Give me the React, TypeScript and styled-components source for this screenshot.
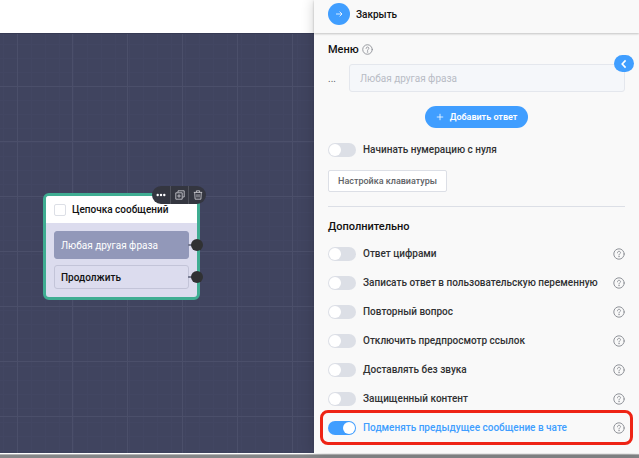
import React, { useState } from "react";
import styled, { createGlobalStyle } from "styled-components";

const blue = "#409eff";

const GlobalStyle = createGlobalStyle`
  *, *::before, *::after { box-sizing: border-box; }
  body {
    margin: 0;
    font-family: Roboto, Inter, sans-serif;
    color: #303133;
    background: #fff;
  }
  button, input { font: inherit; color: inherit; margin: 0; }
  button { padding: 0; border: 0; background: none; cursor: pointer; }
  h2 { margin: 0; }
`;

const Page = styled.div`
  display: flex;
  flex-direction: column;
  min-height: 100vh;
`;

const Workspace = styled.div`
  flex: 1;
  display: grid;
  grid-template-columns: minmax(0, 1fr) 325px;
`;

const Editor = styled.main`
  display: flex;
  flex-direction: column;
`;

const TopBar = styled.header`
  height: 33px;
  background: #fff;
`;

const Canvas = styled.div`
  position: relative;
  flex: 1;
  overflow: hidden;
  background-color: #40445f;
  background-image:
    linear-gradient(#4b4f6a 1px, transparent 1px),
    linear-gradient(90deg, #4b4f6a 1px, transparent 1px),
    linear-gradient(#424662 1px, transparent 1px),
    linear-gradient(90deg, #424662 1px, transparent 1px);
  background-size: 55px 55px, 55px 55px, 14px 14px, 14px 14px;
  background-position: 17px 52px, 17px 52px, 3px 10px, 3px 10px;
  border-top: 1px solid #363a54;
`;

const Node = styled.section`
  position: absolute;
  left: 43px;
  top: 159px;
  width: 157px;
  border: 3px solid #3fad92;
  border-radius: 6px;
  background: #dcdcee;
`;

const NodeHeader = styled.label`
  display: flex;
  align-items: center;
  gap: 6px;
  height: 27px;
  padding-left: 8px;
  border-radius: 3px 3px 0 0;
  background: #fff;
  color: #111;
  font-size: 10px;
  font-weight: 500;
`;

const NodeCheck = styled.input`
  appearance: none;
  width: 12px;
  height: 12px;
  border: 1px solid #dcdfe6;
  border-radius: 2px;
  background: #fff;
`;

const NodeBody = styled.div`
  display: flex;
  flex-direction: column;
  gap: 6px;
  padding: 8px;
`;

const Reply = styled.div<{ $filled?: boolean }>`
  position: relative;
  display: flex;
  align-items: center;
  height: ${(p) => (p.$filled ? 28 : 24)}px;
  padding: 0 6px;
  border: 1px solid ${(p) => (p.$filled ? "#9298b9" : "#c3c4d8")};
  border-radius: 3px;
  background: ${(p) => (p.$filled ? "#9298b9" : "#dcdcee")};
  color: ${(p) => (p.$filled ? "#fff" : "#111")};
  font-size: 10px;
  font-weight: ${(p) => (p.$filled ? 400 : 500)};
  &::before {
    content: "";
    position: absolute;
    left: 100%;
    width: 6px;
    height: 2px;
    background: #777b92;
  }
`;

const Port = styled.span`
  position: absolute;
  right: -15px;
  width: 12px;
  height: 12px;
  border-radius: 50%;
  background: #303133;
`;

const NodeTools = styled.div`
  position: absolute;
  top: -10px;
  right: -9px;
  display: flex;
  height: 18px;
  border-radius: 9px;
  background: #343640;
  color: #fff;
  overflow: hidden;
`;

const NodeTool = styled.button`
  display: grid;
  place-items: center;
  width: 18px;
  & + & { border-left: 1px solid #50525c; }
`;

const Panel = styled.aside`
  position: relative;
  display: flex;
  flex-direction: column;
  background: #f9f9f9;
  box-shadow: 0 0 12px rgba(0, 0, 0, 0.2);
`;

const PanelHeader = styled.header`
  display: flex;
  height: 33px;
  padding: 3px 14px 0;
  background: #f9f9f9;
  box-shadow: 0 1px 2px rgba(0, 0, 0, 0.22);
`;

const CloseButton = styled.button`
  display: flex;
  align-items: center;
  gap: 6px;
  height: 22px;
  color: #111;
  font-size: 10px;
  font-weight: 500;
`;

const CloseIcon = styled.span`
  display: grid;
  place-items: center;
  width: 22px;
  height: 22px;
  border-radius: 50%;
  background: ${blue};
`;

const PanelBody = styled.div`
  display: flex;
  flex-direction: column;
  padding: 8px 14px 0;
`;

const Title = styled.h2`
  display: flex;
  align-items: center;
  gap: 3px;
  height: 16px;
  color: #111;
  font-size: 11px;
  font-weight: 500;
`;

const Answer = styled.label`
  display: grid;
  grid-template-columns: 9px minmax(0, 1fr);
  align-items: center;
  gap: 12px;
  margin-top: 7px;
  color: #606266;
  font-size: 10px;
`;

const AnswerInput = styled.input`
  min-width: 0;
  height: 28px;
  padding: 0 10px;
  border: 1px solid #e4e7ed;
  border-radius: 3px;
  background: #f5f7fa;
  &::placeholder { color: #b8bcc5; opacity: 1; }
`;

const AddButton = styled.button`
  display: flex;
  align-items: center;
  align-self: center;
  gap: 6px;
  height: 22px;
  margin: 14px 0 7px;
  padding: 0 11px;
  border-radius: 11px;
  background: ${blue};
  color: #fff;
  font-size: 9px;
  font-weight: 600;
`;

const KeyboardButton = styled.button`
  align-self: flex-start;
  height: 22px;
  margin: 6px 0 14px;
  padding: 0 9px;
  border: 1px solid #dcdfe6;
  border-radius: 2px;
  background: #fff;
  color: #606266;
  font-size: 9px;
  font-weight: 500;
`;

const Divider = styled.hr`
  width: 100%;
  margin: 0 0 11px;
  border: 0;
  border-top: 1px solid #dcdfe6;
`;

const Options = styled.div`
  display: flex;
  flex-direction: column;
  margin-top: 5px;
`;

const Row = styled.div<{ $marked?: boolean }>`
  position: relative;
  display: flex;
  align-items: center;
  justify-content: space-between;
  height: 29px;
  &::after {
    content: "";
    display: ${(p) => (p.$marked ? "block" : "none")};
    position: absolute;
    inset: -3px -8px;
    border: 3px solid #ee2415;
    border-radius: 8px;
    pointer-events: none;
  }
`;

const SwitchLabel = styled.label<{ $on: boolean }>`
  display: flex;
  align-items: center;
  gap: 7px;
  color: ${(p) => (p.$on ? blue : "#303133")};
  font-size: 10px;
  font-weight: 500;
  white-space: nowrap;
  cursor: pointer;
`;

const SwitchInput = styled.input`
  appearance: none;
  display: flex;
  align-items: center;
  width: 28px;
  height: 14px;
  padding: 1px;
  border-radius: 7px;
  background: #dcdfe6;
  cursor: pointer;
  &::before {
    content: "";
    width: 12px;
    height: 12px;
    border-radius: 50%;
    background: #fff;
  }
  &:checked { justify-content: flex-end; background: ${blue}; }
`;

const HelpButton = styled.button`
  display: grid;
  place-items: center;
`;

const CollapseTab = styled.button`
  position: absolute;
  top: 55px;
  right: 5px;
  display: grid;
  place-items: center;
  width: 20px;
  height: 17px;
  border-radius: 9px;
  background: ${blue};
`;

const Footer = styled.footer`
  height: 4px;
  border-top: 1px solid #b4b5b6;
  background: #858789;
`;

const FooterGap = styled.div`
  height: 1px;
  background: #fff;
`;

function Help({ size = 12 }: { size?: number }) {
  return (
    <HelpButton type="button" aria-label="Справка">
      <svg width={size} height={size} viewBox="0 0 12 12" fill="none" stroke="#909399" strokeLinecap="round">
        <circle cx="6" cy="6" r="5.2" strokeWidth="1" />
        <path d="M4.5 4.8C4.5 3.9 5.1 3.3 6 3.3s1.5.6 1.5 1.4C7.5 5.7 6 5.7 6 7" strokeWidth="1" />
        <circle cx="6" cy="8.7" r=".2" strokeWidth="0.8" />
      </svg>
    </HelpButton>
  );
}

function Switch({ text, initial = false }: { text: string; initial?: boolean }) {
  const [on, setOn] = useState(initial);
  return (
    <SwitchLabel $on={on}>
      <SwitchInput type="checkbox" role="switch" checked={on} onChange={(e) => setOn(e.target.checked)} />
      {text}
    </SwitchLabel>
  );
}

const options = [
  { text: "Ответ цифрами" },
  { text: "Записать ответ в пользовательскую переменную" },
  { text: "Повторный вопрос" },
  { text: "Отключить предпросмотр ссылок" },
  { text: "Доставлять без звука" },
  { text: "Защищенный контент" },
  { text: "Подменять предыдущее сообщение в чате", active: true },
];

export default function App() {
  return (
    <>
      <GlobalStyle />
      <Page>
        <Workspace>
          <Editor>
            <TopBar />
            <Canvas>
              <Node>
                <NodeHeader>
                  <NodeCheck type="checkbox" />
                  Цепочка сообщений
                </NodeHeader>
                <NodeBody>
                  <Reply $filled>Любая другая фраза<Port /></Reply>
                  <Reply>Продолжить<Port /></Reply>
                </NodeBody>
                <NodeTools>
                  <NodeTool type="button" aria-label="Ещё">
                    <svg width="10" height="10" viewBox="0 0 10 10" fill="currentColor">
                      <circle cx="1.7" cy="5" r="1.2" /><circle cx="5" cy="5" r="1.2" /><circle cx="8.3" cy="5" r="1.2" />
                    </svg>
                  </NodeTool>
                  <NodeTool type="button" aria-label="Копировать">
                    <svg width="10" height="10" viewBox="0 0 10 10" fill="none" stroke="#d5d6da" strokeWidth=".8">
                      <path d="M3 2.4V.8h6.2V7H7.6M.8 2.8h6.4v6.4H.8zM4 4.2v3.6M2.2 6h3.6" />
                    </svg>
                  </NodeTool>
                  <NodeTool type="button" aria-label="Удалить">
                    <svg width="10" height="10" viewBox="0 0 10 10" fill="none" stroke="#d5d6da" strokeWidth=".8">
                      <path d="M.8 2.4h8.4M3.4 2.4V.8h3.2v1.6M1.7 2.4l.4 6.8h5.8l.4-6.8M4 4.2v3.2M6 4.2v3.2" />
                    </svg>
                  </NodeTool>
                </NodeTools>
              </Node>
            </Canvas>
          </Editor>
          <Panel>
            <PanelHeader>
              <CloseButton type="button">
                <CloseIcon>
                  <svg width="8" height="8" viewBox="0 0 8 8" fill="none" stroke="#fff" strokeWidth=".8">
                    <path d="M1 4h6M4.6 1.6 7 4 4.6 6.4" />
                  </svg>
                </CloseIcon>
                Закрыть
              </CloseButton>
            </PanelHeader>
            <PanelBody>
              <Title>Меню <Help size={11} /></Title>
              <Answer>
                ...
                <AnswerInput placeholder="Любая другая фраза" />
              </Answer>
              <AddButton type="button">
                <svg width="8" height="8" viewBox="0 0 8 8" stroke="#fff" strokeWidth=".8">
                  <path d="M4 .8v6.4M.8 4h6.4" />
                </svg>
                Добавить ответ
              </AddButton>
              <Row><Switch text="Начинать нумерацию с нуля" /></Row>
              <KeyboardButton type="button">Настройка клавиатуры</KeyboardButton>
              <Divider />
              <Title>Дополнительно</Title>
              <Options>
                {options.map((o) => (
                  <Row key={o.text} $marked={o.active}>
                    <Switch text={o.text} initial={o.active} />
                    <Help />
                  </Row>
                ))}
              </Options>
            </PanelBody>
            <CollapseTab type="button" aria-label="Свернуть панель">
              <svg width="8" height="10" viewBox="0 0 8 10" fill="none" stroke="#fff" strokeWidth="1.6">
                <path d="M5.6 1.4 2.2 5l3.4 3.6" />
              </svg>
            </CollapseTab>
          </Panel>
        </Workspace>
        <FooterGap />
        <Footer />
      </Page>
    </>
  );
}
